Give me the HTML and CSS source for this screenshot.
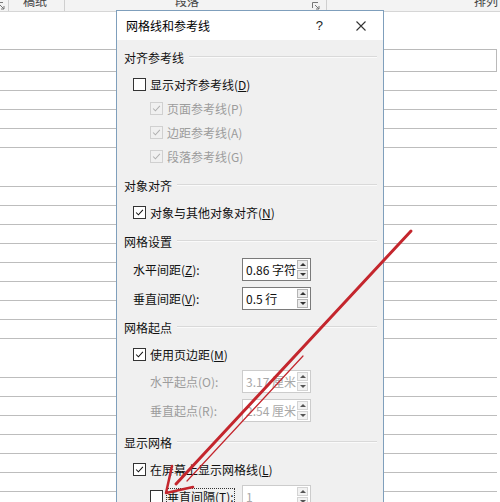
FILE: index.html
```html
<!DOCTYPE html>
<html lang="zh-CN">
<head>
    <meta charset="UTF-8">
    <title>网格线和参考线</title>
    <link rel="stylesheet" href="styles.css">
</head>
<body>
    <div class="ribbon">
        <div class="ribbon-group group-edge">
            <svg class="launcher" viewBox="0 0 8 8"><path d="M0.5 6V0.5H6M3 3l4 4M7 4v3H4"/></svg>
        </div>
        <div class="ribbon-group group-paper"><span class="group-label">稿纸</span></div>
        <div class="ribbon-group group-para">
            <span class="group-label">段落</span>
            <svg class="launcher" viewBox="0 0 8 8"><path d="M0.5 6V0.5H6M3 3l4 4M7 4v3H4"/></svg>
        </div>
        <div class="ribbon-group group-arrange"><span class="group-label">排列</span></div>
    </div>

    <div class="document">
        <div class="doc-head"></div>
        <div class="doc-lines"></div>
    </div>

    <div class="dialog">
        <div class="titlebar">
            <span class="title">网格线和参考线</span>
            <span class="help">?</span>
            <svg class="close" viewBox="0 0 10 10"><path d="M0.5 0.5l9 9M9.5 0.5l-9 9"/></svg>
        </div>
        <div class="dialog-body">
            <div class="section">
                <div class="section-title"><span>对齐参考线</span><i></i></div>
                <label class="check-row">
                    <span class="checkbox"></span>显示对齐参考线(<u>D</u>)
                </label>
                <label class="check-row sub disabled">
                    <span class="checkbox checked"><svg viewBox="0 0 13 13"><path d="M2.5 6.5l2.7 2.7 5.3-5.7"/></svg></span>页面参考线(P)
                </label>
                <label class="check-row sub disabled">
                    <span class="checkbox checked"><svg viewBox="0 0 13 13"><path d="M2.5 6.5l2.7 2.7 5.3-5.7"/></svg></span>边距参考线(A)
                </label>
                <label class="check-row sub disabled">
                    <span class="checkbox checked"><svg viewBox="0 0 13 13"><path d="M2.5 6.5l2.7 2.7 5.3-5.7"/></svg></span>段落参考线(G)
                </label>
            </div>

            <div class="section">
                <div class="section-title"><span>对象对齐</span><i></i></div>
                <label class="check-row">
                    <span class="checkbox checked"><svg viewBox="0 0 13 13"><path d="M2.5 6.5l2.7 2.7 5.3-5.7"/></svg></span>对象与其他对象对齐(<u>N</u>)
                </label>
            </div>

            <div class="section">
                <div class="section-title"><span>网格设置</span><i></i></div>
                <div class="field-row">
                    <span class="label">水平间距(<u>Z</u>):</span>
                    <div class="spinbox">
                        <span class="spin-value">0.86 字符</span>
                        <span class="spin-buttons"><b class="up"></b><b class="down"></b></span>
                    </div>
                </div>
                <div class="field-row">
                    <span class="label">垂直间距(<u>V</u>):</span>
                    <div class="spinbox">
                        <span class="spin-value">0.5 行</span>
                        <span class="spin-buttons"><b class="up"></b><b class="down"></b></span>
                    </div>
                </div>
            </div>

            <div class="section">
                <div class="section-title"><span>网格起点</span><i></i></div>
                <label class="check-row">
                    <span class="checkbox checked"><svg viewBox="0 0 13 13"><path d="M2.5 6.5l2.7 2.7 5.3-5.7"/></svg></span>使用页边距(<u>M</u>)
                </label>
                <div class="field-row sub disabled">
                    <span class="label">水平起点(O):</span>
                    <div class="spinbox">
                        <span class="spin-value">3.17 厘米</span>
                        <span class="spin-buttons"><b class="up"></b><b class="down"></b></span>
                    </div>
                </div>
                <div class="field-row sub disabled">
                    <span class="label">垂直起点(R):</span>
                    <div class="spinbox">
                        <span class="spin-value">2.54 厘米</span>
                        <span class="spin-buttons"><b class="up"></b><b class="down"></b></span>
                    </div>
                </div>
            </div>

            <div class="section section-display">
                <div class="section-title"><span>显示网格</span><i></i></div>
                <label class="check-row">
                    <span class="checkbox checked"><svg viewBox="0 0 13 13"><path d="M2.5 6.5l2.7 2.7 5.3-5.7"/></svg></span>在屏幕上显示网格线(<u>L</u>)
                </label>
                <div class="field-row sub">
                    <span class="label check-label"><span class="checkbox"></span><span class="focus">垂直间隔(<u>T</u>):</span></span>
                    <div class="spinbox is-off">
                        <span class="spin-value">1</span>
                        <span class="spin-buttons"><b class="up"></b><b class="down"></b></span>
                    </div>
                </div>
            </div>
        </div>
    </div>

    <!-- red annotation arrow drawn over the screenshot -->
    <svg class="arrow" viewBox="0 0 500 502">
        <path class="arrow-shaft" d="M411 231L176 484"/>
        <path class="arrow-shaft thin" d="M300 354L184 479"/>
        <path class="arrow-head" d="M193 487L166 493L172 466"/>
    </svg>
</body>
</html>
```

FILE: styles.css
```css
body {
    margin: 0;
    width: 500px;
    height: 502px;
    overflow: hidden;
    position: relative;
    background: #fff;
    font-family: "Noto Sans CJK SC", "Noto Sans", sans-serif;
    font-size: 12px;
    color: #111;
}

/* ribbon strip at the top, cut off by the window */
.ribbon {
    display: flex;
    height: 11px;
    background: #f3f3f3;
    border-bottom: 1px solid #d6d6d6;
    overflow: hidden;
}
.ribbon-group {
    display: flex;
    align-items: flex-start;
    border-right: 1px solid #cfcfcf;
    box-sizing: border-box;
}
.group-edge {
    width: 9px;
}
.group-paper {
    width: 56px;
    padding-left: 14px;
}
.group-para {
    width: 262px;
    padding-left: 110px;
}
.group-arrange {
    flex: 1;
    padding-left: 147px;
    border-right: none;
}
.group-label {
    line-height: 12px;
    margin-top: -5px;
    color: #444;
}
.launcher {
    width: 8px;
    height: 8px;
    margin-top: 2px;
    fill: none;
    stroke: #777;
    stroke-width: 1;
}
.group-edge .launcher {
    margin-left: -3px;
}
.group-para .launcher {
    margin-left: 113px;
}

/* ruled document behind the dialog */
.document {
    width: 497px;
    padding-top: 37px;
}
.doc-head {
    height: 21px;
    border: 1px solid #bababa;
    border-left: none;
}
.doc-lines {
    height: 440px;
    background: repeating-linear-gradient(to bottom, transparent 0, transparent 18.1px, #bdbdbd 18.1px, #bdbdbd 19.1px);
}

/* dialog */
.dialog {
    position: absolute;
    left: 116px;
    top: 10px;
    width: 268px;
    height: 520px;
    box-sizing: border-box;
    border: 1px solid #7f9fbc;
    background: #f0f0f0;
}
.titlebar {
    display: flex;
    align-items: center;
    height: 29px;
    background: #fff;
    padding-left: 9px;
}
.title {
    flex: 1;
    color: #000;
}
.help {
    font-family: "Liberation Sans", sans-serif;
    font-size: 13px;
    margin-right: 33px;
    color: #222;
}
.close {
    width: 10px;
    height: 10px;
    margin-right: 17px;
    fill: none;
    stroke: #333;
    stroke-width: 1.1;
}
.dialog-body {
    padding: 0 6px 0 7px;
}

.section-title {
    display: flex;
    align-items: center;
    height: 16px;
    margin-top: 9px;
    color: #111;
}
.section-title i {
    flex: 1;
    margin-left: 5px;
    border-top: 1px solid #d9d9d9;
    border-bottom: 1px solid #fafafa;
}
.section-display .section-title {
    margin-top: 12px;
}

.check-row {
    display: flex;
    align-items: center;
    height: 24px;
    padding-left: 9px;
}
.section-title + .check-row {
    margin-top: 7px;
}
.check-row.sub {
    padding-left: 26px;
}
.checkbox {
    width: 13px;
    height: 13px;
    box-sizing: border-box;
    border: 1px solid #333;
    background: #fff;
    margin-right: 4px;
    flex-shrink: 0;
}
.checkbox svg {
    display: block;
    width: 11px;
    height: 11px;
    fill: none;
    stroke: #111;
    stroke-width: 1.2;
}
.disabled {
    color: #9c9c9c;
}
.disabled .checkbox {
    border-color: #d0d0d0;
    background: transparent;
}
.disabled .checkbox svg {
    stroke: #b0b0b0;
}

.field-row {
    display: flex;
    align-items: center;
    height: 23px;
    margin-top: 6px;
    padding-left: 9px;
}
.section-title + .field-row {
    margin-top: 9px;
}
.check-row + .field-row {
    margin-top: 4px;
}
.field-row .label {
    width: 109px;
}
.field-row.sub {
    padding-left: 26px;
}
.field-row.sub .label {
    width: 92px;
}
.check-label {
    display: flex;
    align-items: center;
}
.check-label .checkbox {
    margin-right: 4px;
}
.focus {
    outline: 1px dotted #333;
    line-height: 16px;
}

.spinbox {
    display: flex;
    align-items: center;
    width: 69px;
    height: 23px;
    box-sizing: border-box;
    border: 1px solid #7a7a7a;
    background: #fff;
    padding-left: 3px;
}
.spin-value {
    flex: 1;
    overflow: hidden;
    white-space: nowrap;
    color: #111;
}
.spin-buttons {
    display: flex;
    flex-direction: column;
    gap: 1px;
    margin: 0 2px 0 1px;
}
.spin-buttons b {
    display: flex;
    align-items: center;
    justify-content: center;
    width: 11px;
    height: 9px;
    box-sizing: border-box;
    border: 1px solid #b4b4b4;
    background: #ececec;
}
.spin-buttons b::after {
    content: '';
    border-left: 3px solid transparent;
    border-right: 3px solid transparent;
}
.spin-buttons .up::after {
    border-bottom: 3px solid #333;
}
.spin-buttons .down::after {
    border-top: 3px solid #333;
}
.disabled .spinbox,
.spinbox.is-off {
    border-color: #cccccc;
}
.disabled .spin-value,
.spinbox.is-off .spin-value {
    color: #a8a8a8;
}
.disabled .spin-buttons b,
.spinbox.is-off .spin-buttons b {
    border-color: #d4d4d4;
    background: #f2f2f2;
}
.disabled .spin-buttons .up::after,
.spinbox.is-off .spin-buttons .up::after {
    border-bottom-color: #555;
}
.disabled .spin-buttons .down::after,
.spinbox.is-off .spin-buttons .down::after {
    border-top-color: #555;
}

.arrow {
    position: absolute;
    left: 0;
    top: 0;
    width: 500px;
    height: 502px;
    pointer-events: none;
    fill: none;
    stroke: #c4262d;
    stroke-linecap: round;
}
.arrow-shaft {
    stroke-width: 3;
}
.arrow-shaft.thin {
    stroke-width: 1.2;
    transform: translate(3px, 2px);
}
.arrow-head {
    stroke-width: 2.5;
    stroke-linejoin: round;
}
```
